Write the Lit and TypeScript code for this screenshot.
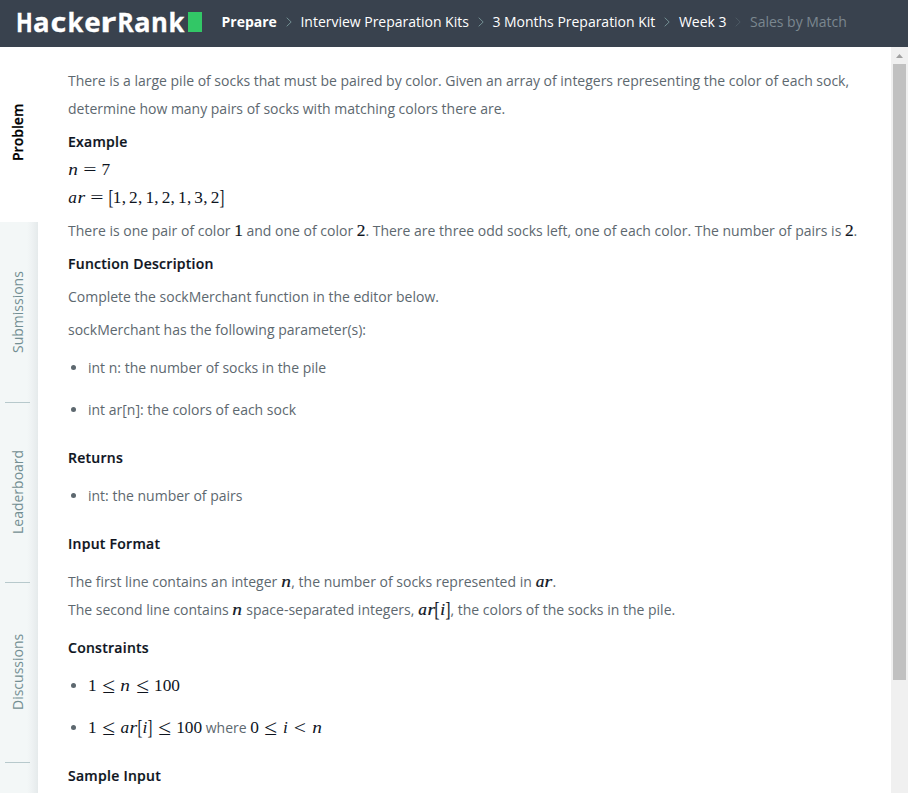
import { LitElement, html, css } from "lit";
import { customElement } from "lit/decorators.js";
import { classMap } from "lit/directives/class-map.js";

const KINDS: Record<string, string> = {
  n: "w-n", a: "w-a", r: "w-r", i: "w-i",
  "=": "rel", "≤": "rel leq", "<": "rel lt", ",": "comma", "[": "br", "]": "br close",
};

const math = (src: string, bold = false) => html`<span class=${classMap({ math: true, strong: bold })}>${
  [...src].map((c) => html`<span class="t ${KINDS[c] ?? "digit"}"><span class="g">${c}</span></span>`)
}</span>`;

@customElement("app-root")
export class AppRoot extends LitElement {
  static styles = css`
    :host {
      display: flex;
      flex-direction: column;
      height: 793px;
      overflow: hidden;
      background: #fff;
      color: #5d686f;
      font: 14px/28px "Open Sans", sans-serif;
    }
    header {
      display: flex;
      align-items: center;
      flex: none;
      box-sizing: border-box;
      height: 47px;
      padding: 0 0 3px 16px;
      background: #39424e;
      color: #fff;
    }
    .logo { display: flex; align-items: center; width: 205.6px; }
    .word { display: flex; width: 172px; font: 700 27px/30px "Open Sans", sans-serif; }
    .cell { display: flex; justify-content: center; width: 16.9px; flex: none; -webkit-text-stroke: 0.3px #fff; }
    .cell.H { transform: scaleX(0.81); }
    .cell.a { transform: scaleX(1.02); }
    .cell.c { transform: scaleX(1.14); }
    .cell.e { transform: scaleX(1.03); }
    .cell.r { transform: scaleX(1.32); }
    .cell.R { transform: scaleX(0.93); }
    .cell.k, .cell.n { transform: scaleX(0.95); }
    .block { width: 14px; height: 20px; background: #32c766; }
    nav { display: flex; align-items: center; white-space: nowrap; letter-spacing: -0.015px; }
    .crumb { font-weight: 500; }
    .crumb.first { font-weight: 700; }
    .crumb.last { color: #7b8790; }
    .sep { width: 6px; height: 10px; margin: 0 8.8px; fill: none; stroke: #738f93; }
    .sep.dim { stroke: #4d5a64; }

    .body { display: flex; flex: 1; min-height: 0; }
    aside { display: flex; flex-direction: column; width: 38px; flex: none; }
    .tab {
      display: flex;
      flex-direction: column;
      flex: none;
      align-items: center;
      height: 180px;
      background: linear-gradient(to right, #f3f7f7 27px, #eef2f3 32px, #e5eaeb 38px);
      color: #738f93;
    }
    .tab.active { height: 175px; background: #fff; color: #000; font-weight: 600; -webkit-text-stroke: 0.25px #000; }
    .active + .tab { height: 181px; }
    .label {
      display: flex;
      flex: 1;
      align-items: center;
      justify-content: center;
      writing-mode: vertical-rl;
      transform: rotate(180deg);
      line-height: 20px;
      margin-right: 2px;
      padding-top: 2px;
    }
    .active + .tab .label { padding-top: 0; }
    .active .label { padding-top: 4px; }
    .rule { width: 25px; height: 1px; margin-right: 3px; background: #b7c9cc; }

    main { flex: 1; padding: 20px 0 0 30px; white-space: nowrap; }
    p, ul, h3 { margin: 0; padding: 0; font-size: 14px; }
    p { margin-bottom: 5px; }
    .plain { letter-spacing: -0.012px; }
    h3 { font-weight: 600; color: #0e141e; letter-spacing: 0.27px; -webkit-text-stroke: 0.2px #0e141e; }
    .gap5 { margin-bottom: 5px; }
    .gap10 { margin-bottom: 10px; }
    ul { list-style: none; margin: 10px 0 20px; }
    li { display: flex; align-items: center; height: 28px; }
    li + li { margin-top: 14px; }
    .dot { width: 5px; height: 5px; margin: 0 12px 1px 3px; border-radius: 50%; background: #5d686f; }

    .scroll { display: flex; flex-direction: column; align-items: center; width: 17px; flex: none; background: #f0f0f0; }
    .arrow { width: 7px; height: 4px; margin: 7px 0 6px; fill: #a0a0a0; }
    .thumb { width: 13px; height: 616px; background: #c1c1c1; }

    .math { color: #0e141e; font: 17.3px/20px "Liberation Serif", serif; white-space: nowrap; }
    .t { display: inline-flex; justify-content: center; }
    .g { display: block; }
    .digit { width: 0.5em; }
    .w-n, .w-a, .w-r, .w-i { font-style: italic; }
    .w-n { width: 0.6em; }
    .w-n .g { transform: translateX(-0.3px) scaleX(1.12); }
    .w-r .g { transform: scaleX(1.14); }
    .w-a { width: 0.529em; }
    .w-r { width: 0.451em; }
    .w-i { width: 0.345em; }
    .rel { width: 0.778em; margin: 0 0.278em; }
    .rel .g { transform: scaleX(1.36); }
    .rel.leq { width: 0.805em; }
    .rel.leq .g { transform: scale(1.35, 1.3); }
    .rel.lt { width: 0.81em; }
    .rel.lt .g { transform: scale(1.25, 1.1); }
    .comma { width: 0.278em; margin-right: 0.167em; }
    .br { width: 0.278em; }
    .br .g { transform: scale(0.85, 1.16); }
    .strong { -webkit-text-stroke: 0.2px #0e141e; }
  `;

  private tabs = ["Problem", "Submissions", "Leaderboard", "Discussions"];

  private sep(dim = false) {
    return html`<svg class=${dim ? "sep dim" : "sep"} viewBox="0 0 6 10"><path d="M.7 .7 5.2 5 .7 9.3" /></svg>`;
  }

  render() {
    return html`
      <header>
        <div class="logo">
          <span class="word">${[..."HackerRank"].map((c) => html`<span class="cell ${c}">${c}</span>`)}</span>
          <span class="block"></span>
        </div>
        <nav>
          <span class="crumb first">Prepare</span>${this.sep()}
          <span class="crumb">Interview Preparation Kits</span>${this.sep()}
          <span class="crumb">3 Months Preparation Kit</span>${this.sep()}
          <span class="crumb">Week 3</span>${this.sep(true)}
          <span class="crumb last">Sales by Match</span>
        </nav>
      </header>
      <div class="body">
        <aside>
          ${this.tabs.map((t, i) => html`
            <div class=${classMap({ tab: true, active: i === 0 })}>
              <span class="label">${t}</span>
              ${i ? html`<span class="rule"></span>` : ""}
            </div>`)}
          <div class="tab"></div>
        </aside>
        <main>
          <p class="plain">There is a large pile of socks that must be paired by color. Given an array of integers representing the color of each sock,<br />determine how many pairs of socks with matching colors there are.</p>
          <h3>Example</h3>
          <p>${math("n=7")}<br />${math("ar=[1,2,1,2,1,3,2]")}</p>
          <p>There is one pair of color ${math("1", true)} and one of color ${math("2", true)}. There are three odd socks left, one of each color. The number of pairs is ${math("2", true)}.</p>
          <h3 class="gap5">Function Description</h3>
          <p class="plain">Complete the sockMerchant function in the editor below.</p>
          <p>sockMerchant has the following parameter(s):</p>
          <ul>
            <li><span class="dot"></span>int n: the number of socks in the pile</li>
            <li><span class="dot"></span>int ar[n]: the colors of each sock</li>
          </ul>
          <h3>Returns</h3>
          <ul>
            <li><span class="dot"></span>int: the number of pairs</li>
          </ul>
          <h3 class="gap10">Input Format</h3>
          <p class="gap10">The first line contains an integer ${math("n", true)}, the number of socks represented in ${math("ar", true)}.<br />The second line contains ${math("n", true)} space-separated integers, ${math("ar[i]", true)}, the colors of the socks in the pile.</p>
          <h3>Constraints</h3>
          <ul>
            <li><span class="dot"></span><span>${math("1≤n≤100")}</span></li>
            <li><span class="dot"></span><span>${math("1≤ar[i]≤100")} where ${math("0≤i<n")}</span></li>
          </ul>
          <h3>Sample Input</h3>
        </main>
        <div class="scroll">
          <svg class="arrow" viewBox="0 0 7 4"><path d="M3.5 0 7 4H0Z" /></svg>
          <div class="thumb"></div>
        </div>
      </div>
    `;
  }
}
